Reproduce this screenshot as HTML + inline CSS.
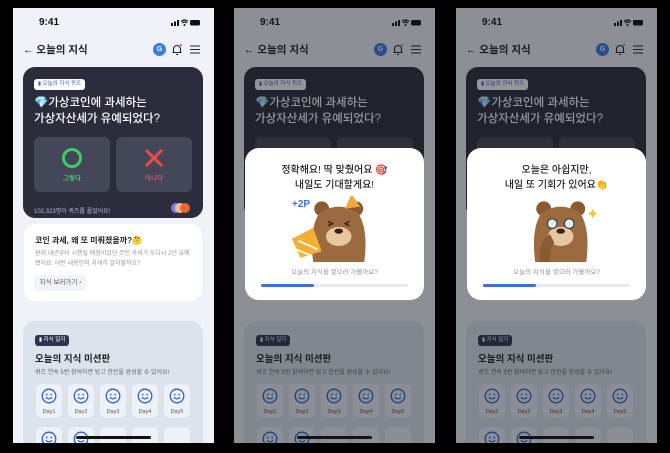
<!DOCTYPE html><html><head><meta charset="utf-8"><style>
*{margin:0;padding:0;box-sizing:border-box}
body{width:670px;height:453px;background:#000;position:relative;overflow:hidden;font-family:"Liberation Sans","Noto Sans CJK KR",sans-serif}
.ph{position:absolute;top:8px;width:201px;height:435px;background:#eff2f8;overflow:hidden}
.a{position:absolute}
.time{left:26px;top:9px;font-size:10px;font-weight:bold;color:#111}
.hd{left:10px;top:34px;font-size:10.5px;font-weight:bold;color:#222}
.card{left:10px;top:59px;width:180px;height:151px;border-radius:12px;background:#2b2d3d}
.tag{left:11px;top:12px;background:#fff;border-radius:3px;height:11px;padding:0 4px;font-size:5.5px;line-height:11px;color:#3a5bd0}
.q{left:11px;top:28px;font-size:11.5px;line-height:16px;font-weight:500;color:#fff}
.btn{top:70px;width:76px;height:55px;border-radius:6px;background:#444757}
.bl{position:absolute;bottom:10px;width:100%;text-align:center;font-size:6.5px;font-weight:bold}
.c2{left:11px;top:216px;width:178px;height:77px;border-radius:12px;background:#fff}
.c3{left:10px;top:313px;width:180px;height:140px;border-radius:12px;background:#dce3ed}
.day{width:26px;height:34px;border-radius:6px;background:#edf1f8;position:absolute}
.day span{position:absolute;bottom:3px;width:100%;text-align:center;font-size:5.5px;color:#555}
.day svg{position:absolute;left:5px;top:4px}
.ov{left:0;top:0;width:201px;height:435px;background:rgba(20,22,28,.45)}
.modal{left:11px;top:140px;width:179px;height:152px;border-radius:14px;background:#fff}
.mt{position:absolute;top:15px;width:100%;text-align:center;font-size:10px;line-height:15px;font-weight:500;color:#222}
.cap{position:absolute;top:118px;width:100%;text-align:center;font-size:6.5px;color:#8a93a8}
.pb{position:absolute;left:16px;top:136px;width:147px;height:3px;border-radius:2px;background:#e6ebf3}
.pb i{display:block;width:53px;height:3px;border-radius:2px;background:#3a6ee8}
.home{left:63px;top:428px;width:75px;height:3px;border-radius:2px;background:#111}
</style></head><body>
<script>
function smile(){return '<svg width="16" height="16" viewBox="0 0 16 16"><circle cx="8" cy="8" r="6.8" fill="none" stroke="#2f5fd6" stroke-width="1.3"/><circle cx="5.8" cy="6.5" r=".9" fill="#2f5fd6"/><circle cx="10.2" cy="6.5" r=".9" fill="#2f5fd6"/><path d="M4.8 9.3Q8 12.5 11.2 9.3" fill="none" stroke="#2f5fd6" stroke-width="1.2"/></svg>';}
function phone(x,extra){
let d='';for(let i=0;i<5;i++)d+='<div class="day" style="left:'+(13+i*32)+'px;top:63px">'+smile()+'<span>Day'+(i+1)+'</span></div>';
for(let i=0;i<5;i++)d+='<div class="day" style="left:'+(13+i*32)+'px;top:106px">'+(i<2?smile():'')+'</div>';
return '<div class="ph" style="left:'+x+'px">'+
'<div class="a time">9:41</div>'+
'<svg class="a" style="left:158px;top:10px" width="30" height="9"><rect x="0" y="5" width="2" height="3" fill="#111"/><rect x="3" y="3.5" width="2" height="4.5" fill="#111"/><rect x="6" y="2" width="2" height="6" fill="#111"/><path d="M10 3.5Q13.5 0.5 17 3.5M11.3 5Q13.5 3 15.7 5" stroke="#111" stroke-width="1.2" fill="none"/><circle cx="13.5" cy="7" r="1" fill="#111"/><rect x="19" y="2" width="10" height="5.5" rx="1.5" fill="#111"/></svg>'+
'<div class="a hd">← 오늘의 지식</div>'+
'<div class="a" style="left:140px;top:35px;width:13px;height:13px;border-radius:50%;background:#3c7be8;color:#fff;font-size:7px;text-align:center;line-height:13px;font-weight:bold">G</div>'+
'<svg class="a" style="left:158px;top:35px" width="12" height="13"><path d="M2.5 9.5V6a3.5 3.5 0 0 1 7 0v3.5H2.5zM1.5 9.5h9M5 11.5h2" stroke="#222" stroke-width="1.1" fill="none"/><circle cx="10" cy="2" r="1" fill="#e44"/></svg>'+
'<svg class="a" style="left:177px;top:37px" width="11" height="9"><path d="M0 1h10M0 4.5h10M0 8h10" stroke="#222" stroke-width="1.1"/></svg>'+
'<div class="a card"><div class="a tag">▮ 오늘의 지식 퀴즈</div><div class="a q">💎가상코인에 과세하는<br>가상자산세가 유예되었다?</div>'+
'<div class="a btn" style="left:11px"><svg style="position:absolute;left:27px;top:10px" width="22" height="22"><circle cx="11" cy="11" r="8.5" fill="none" stroke="#3ccd6b" stroke-width="3"/></svg><div class="bl" style="color:#3ccd6b">그렇다</div></div>'+
'<div class="a btn" style="left:93px"><svg style="position:absolute;left:27px;top:10px" width="22" height="22"><path d="M3 3L19 19M19 3L3 19" stroke="#ea4c4c" stroke-width="3"/></svg><div class="bl" style="color:#ea4c4c">아니다</div></div>'+
'<div class="a" style="left:11px;top:139px;font-size:6px;color:#b8bccb">102,323명이 퀴즈를 풀었어요!</div>'+
'<div class="a" style="left:148px;top:136px;width:10px;height:10px;border-radius:50%;background:#8a7ae0"></div><div class="a" style="left:152px;top:136px;width:10px;height:10px;border-radius:50%;background:#f0c090"></div><div class="a" style="left:157px;top:136px;width:10px;height:10px;border-radius:50%;background:#e8663a"></div></div>'+
'<div class="a c2"><div class="a" style="left:11px;top:11px;font-size:8px;font-weight:bold;color:#222">코인 과세, 왜 또 미뤄졌을까?🤔</div><div class="a" style="left:11px;top:25px;width:160px;font-size:6px;line-height:10px;color:#999">원래 내년부터 시행될 예정이었던 코인 과세가 또다시 2년 유예됐어요. 어떤 내용인지 자세히 알아볼까요?</div><div class="a" style="left:10px;top:51px;width:53px;height:16px;border-radius:5px;background:#f0f3f8;font-size:6.5px;line-height:16px;text-align:center;color:#555">지식 보러가기 ›</div></div>'+
'<div class="a c3"><div class="a" style="left:12px;top:14px;height:11px;padding:0 4px;border-radius:3px;background:#2f3550;color:#fff;font-size:5.5px;line-height:11px">▮ 지식 일지</div><div class="a" style="left:12px;top:30px;font-size:9.5px;font-weight:bold;color:#222">오늘의 지식 미션판</div><div class="a" style="left:12px;top:46px;font-size:6px;color:#666">퀴즈 연속 5번 참여하면 빙고 한칸을 완성할 수 있어요!</div>'+d+'</div>'+
'<div class="a home"></div>'+extra+'</div>';}
function bear(hat){return '<svg class="a" style="left:44px;top:48px" width="92" height="66" viewBox="0 0 85 62">'+
'<circle cx="30" cy="12" r="7" fill="#8a5a32"/><circle cx="62" cy="12" r="7" fill="#8a5a32"/><path d="M22 62Q18 30 28 16Q46 4 64 16Q74 30 70 62Z" fill="#9b6a3e"/><ellipse cx="46" cy="38" rx="12" ry="9" fill="#e6c8a0"/><ellipse cx="46" cy="33" rx="4" ry="2.5" fill="#3a2414"/>'+
(hat?'<path d="M36 24l4 2-4 2M56 24l-4 2 4 2" stroke="#222" stroke-width="1.3" fill="none"/><path d="M52 12L58 -2 66 10Z" fill="#f4a73a"/><path d="M2 40L22 30 30 52 10 58Z" fill="#f2b035"/><path d="M8 42l18 8M6 50l14 6" stroke="#fff" stroke-width="1.5"/>':'<circle cx="38" cy="26" r="4.5" fill="#dfeefc" stroke="#333"/><circle cx="54" cy="26" r="4.5" fill="#dfeefc" stroke="#333"/><path d="M26 62Q26 40 36 36L40 44Q34 52 36 62Z" fill="#8a5a32"/><path d="M76 12l1.5 3 3 1.5-3 1.5-1.5 3-1.5-3-3-1.5 3-1.5z" fill="#f6c23e"/>')+'</svg>';}
function modal(t,hat){return '<div class="a ov"></div><div class="a modal"><div class="mt">'+t+'</div>'+(hat?'<div class="a" style="left:47px;top:51px;font-size:10px;font-weight:bold;color:#3a6ee8">+2P</div>':'')+bear(hat)+'<div class="cap">오늘의 지식을 쌓으러 가볼까요?</div><div class="pb"><i></i></div></div>';}
document.body.innerHTML=phone(13,'')+phone(234,modal('정확해요! 딱 맞췄어요 🎯<br>내일도 기대할게요!',true))+phone(456,modal('오늘은 아쉽지만,<br>내일 또 기회가 있어요👏',false));
</script>
</body></html>
